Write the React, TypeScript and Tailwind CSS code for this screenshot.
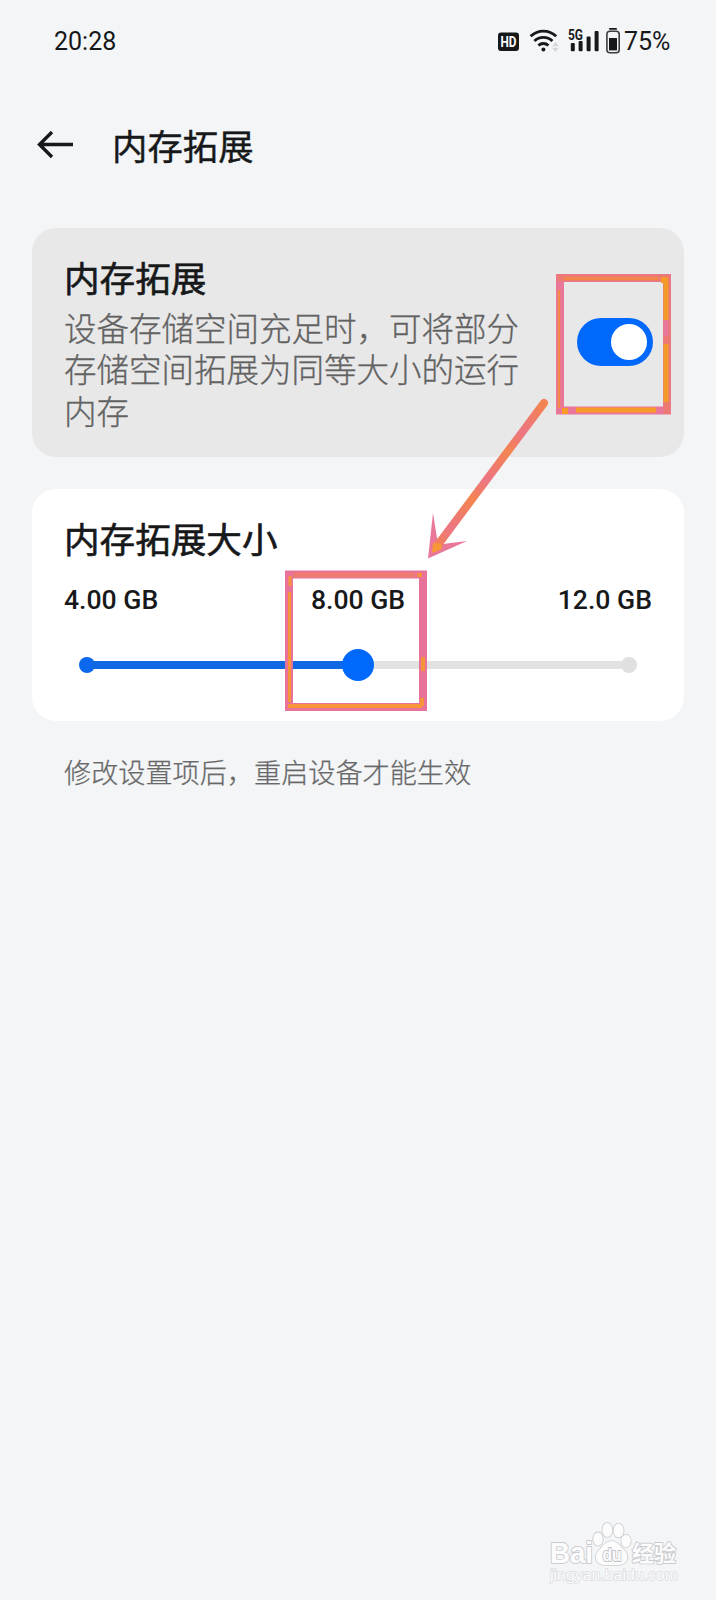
const SIZES = ["4.00 GB", "8.00 GB", "12.0 GB"];

function StatusIcons() {
  return (
    <svg width="124" height="32" viewBox="497 26 124 32" fill="none">
      <rect x="498" y="32.5" width="21" height="18.5" rx="3" fill="#17181a" />
      <text x="508.5" y="46.6" textAnchor="middle" fontSize="14" fontWeight="700" fontFamily="Roboto, sans-serif" textLength="16" lengthAdjust="spacingAndGlyphs" fill="#fff">HD</text>
      <g stroke="#17181a" strokeWidth="2.9">
        <path d="M530.6 36.3a18.4 18.4 0 0 1 25.6 0" />
        <path d="M534.4 41a13 13 0 0 1 18 0" />
        <path d="M538.4 45.5a7.4 7.4 0 0 1 10 0" />
      </g>
      <circle cx="543.4" cy="49.6" r="2" fill="#17181a" />
      <path d="M555.5 42l3.2 4.2h-6.4zM555.5 52l3.2-4.2h-6.4z" fill="#d3d5d7" />
      <text x="568" y="39.8" fontSize="14" fontWeight="700" fontFamily="Roboto, sans-serif" textLength="15" lengthAdjust="spacingAndGlyphs" fill="#17181a">5G</text>
      <g fill="#17181a">
        <rect x="570.8" y="43" width="4" height="8.3" rx="1" />
        <rect x="578.6" y="41" width="4" height="10.3" rx="1" />
        <rect x="586.6" y="36.5" width="4" height="14.8" rx="1" />
        <rect x="594.6" y="31" width="4" height="20.3" rx="1" />
        <rect x="609" y="28" width="8" height="1.8" rx="0.8" />
        <rect x="609" y="38" width="8" height="12.4" />
      </g>
      <rect x="606.9" y="31.2" width="12.3" height="21.6" rx="3" stroke="#3c3d3f" strokeWidth="1.6" />
    </svg>
  );
}

function Toggle() {
  return (
    <div className="mb-[2px] flex h-12 w-[76px] shrink-0 items-center justify-end rounded-full bg-[#0068fb] pr-[6px]">
      <div className="size-9 rounded-full bg-white" />
    </div>
  );
}

function Slider() {
  return (
    <div className="flex h-8 items-center px-[15px]">
      <div className="-mr-1 size-4 rounded-full bg-[#0b68ee]" />
      <div className="h-2 flex-1 bg-[#1069e2]" />
      <div className="z-10 -mx-1 size-8 rounded-full bg-[#0068fb]" />
      <div className="h-2 flex-1 bg-[#e2e2e2]" />
      <div className="-ml-1 size-4 rounded-full bg-[#e0e0e0]" />
    </div>
  );
}

// Hand-drawn marks lying over the cards
function Marks() {
  return (
    <svg className="pointer-events-none absolute top-0 left-0 z-20" width="716" height="800" viewBox="0 0 716 800" fill="none">
      <defs>
        <linearGradient id="shaft" gradientUnits="userSpaceOnUse" x1="544" y1="403" x2="508" y2="451" spreadMethod="repeat">
          <stop offset="0" stopColor="#f48550" />
          <stop offset="0.35" stopColor="#ef7a6c" />
          <stop offset="0.6" stopColor="#ec7684" />
          <stop offset="0.85" stopColor="#f17d64" />
          <stop offset="1" stopColor="#f48550" />
        </linearGradient>
      </defs>

      <rect x="560" y="278" width="107" height="132.5" stroke="#e8779a" strokeWidth="8" />
      <path d="M557 278h112" stroke="#ee7a72" strokeWidth="7" />
      <path d="M667 275v139" stroke="#ec7a72" strokeWidth="7" />
      <path d="M564 278.500h94M559 290v118" stroke="#f48b45" strokeWidth="2.5" />
      <path d="M576 410h80" stroke="#f79a28" strokeWidth="5" />
      <path d="M666 283v37M666 344v58" stroke="#f39a2b" strokeWidth="5" />
      <path d="M666 320v16" stroke="#e8779a" strokeWidth="5" />
      <path d="M661 280h7M562 411h6" stroke="#f79a28" strokeWidth="6" />

      <rect x="289" y="574.5" width="134" height="132.5" stroke="#e8739a" strokeWidth="8" />
      <path d="M293 575h122" stroke="#ee7b72" strokeWidth="5" />
      <path d="M289.5 592v110M290 576v10" stroke="#f6943c" strokeWidth="3" />
      <path d="M288 706h134" stroke="#f8943a" strokeWidth="4" />
      <path d="M423 657v14M422 698v8M417 575h5" stroke="#f6943c" strokeWidth="4" />

      <path d="M433 513L437 538L443 544L467 541L428 558.5Z" fill="#e8779a" />
      <path d="M544 403L437 546" stroke="url(#shaft)" strokeWidth="8" strokeLinecap="round" />
      <path d="M432 553l1-10 8 1 1 5z" fill="#f79636" />
    </svg>
  );
}

function Watermark() {
  return (
    <svg width="134" height="64" viewBox="546 1520 134 64" fill="#fcfcfd" stroke="#c9cbcd" strokeWidth="1.8" paintOrder="stroke" strokeLinejoin="round">
      <text x="550" y="1562.5" fontSize="29" fontWeight="700" fontFamily="Liberation Sans, sans-serif" textLength="43" lengthAdjust="spacingAndGlyphs">Bai</text>
      <g strokeWidth="1.6">
        <ellipse cx="598" cy="1539" rx="4.8" ry="6.6" />
        <ellipse cx="607.3" cy="1530" rx="5" ry="7" />
        <ellipse cx="618.6" cy="1530.6" rx="5" ry="7" />
        <ellipse cx="626" cy="1541" rx="4.8" ry="6.2" />
        <path d="M611.5 1541c5 0 8 4 11 7.5 5 4 6 8 4 12-2 4.500-7 4.800-15 4.500-8 .3-13 0-15-4.500-2-4 0-8 4-12 3-3.500 6-7.500 11-7.500z" />
      </g>
      <text x="602.5" y="1560.500" fontSize="19" fontWeight="700" fontFamily="Liberation Sans, sans-serif" textLength="19" lengthAdjust="spacingAndGlyphs" stroke="#bfc1c3">du</text>
      <text x="632" y="1561" fontSize="22" fontWeight="700" fontFamily="Noto Sans CJK SC, sans-serif" textLength="44" lengthAdjust="spacingAndGlyphs">经验</text>
      <text x="550" y="1580" fontSize="15" fontFamily="Liberation Sans, sans-serif" textLength="128" lengthAdjust="spacingAndGlyphs" strokeWidth="1.3" stroke="#d9dbdd">jingyan.baidu.com</text>
    </svg>
  );
}

export default function App() {
  return (
    <div className="relative flex h-[1600px] w-[716px] flex-col bg-[#f3f5f7] font-['Roboto','Noto_Sans_CJK_SC',sans-serif] text-[#17181a]">
      <header className="flex h-[84px] items-center justify-between pr-[46px] pl-[54px] text-[25px]">
        <span>20:28</span>
        <div className="flex items-center gap-[3px]">
          <StatusIcons />
          <span className="w-[46px] whitespace-nowrap text-[25px] tracking-[-0.1px]">75%</span>
        </div>
      </header>

      <div className="flex h-[144px] items-center gap-[38px] pb-[22px] pl-[37px]">
        <svg width="37" height="28" viewBox="0 0 37 28" fill="none" stroke="#17181a" strokeWidth="3.4">
          <path d="M36 13.500H3M15 1L2.500 13.500L15 26" />
        </svg>
        <h1 className="pt-[7px] text-[35.400px] leading-none [-webkit-text-stroke:0.4px_#17181a]">内存拓展</h1>
      </div>

      <main className="flex flex-col gap-8 px-8">
        <section className="flex h-[229px] items-center justify-between rounded-3xl bg-[#e8e8e8] pr-[31px] pl-8">
          <div className="w-[460px] pt-[5px]">
            <h2 className="text-[35.600px] leading-[48px] [-webkit-text-stroke:0.6px_#17181a]">内存拓展</h2>
            <p className="mt-[6px] text-[32.500px] leading-[41.600px] font-light text-[#626262] [-webkit-text-stroke:0.3px_#626262]">
              设备存储空间充足时，可将部分存储空间拓展为同等大小的运行内存
            </p>
          </div>
          <Toggle />
        </section>

        <section className="h-[232px] rounded-3xl bg-white px-8 pt-7">
          <h2 className="text-[35.600px] leading-[48px] [-webkit-text-stroke:0.6px_#17181a]">内存拓展大小</h2>
          <div className="mt-[17px] flex h-[36px] items-center justify-between text-[26.600px] font-medium">
            {SIZES.map((size) => <span key={size}>{size}</span>)}
          </div>
          <div className="mt-[31px]"><Slider /></div>
        </section>
      </main>

      <p className="mt-[33px] pl-16 text-[27.150px] leading-[40px] font-light text-[#686868] [-webkit-text-stroke:0.25px_#686868]">修改设置项后，重启设备才能生效</p>

      <footer className="mt-auto flex justify-end pr-9 pb-4"><Watermark /></footer>
      <Marks />
    </div>
  );
}
